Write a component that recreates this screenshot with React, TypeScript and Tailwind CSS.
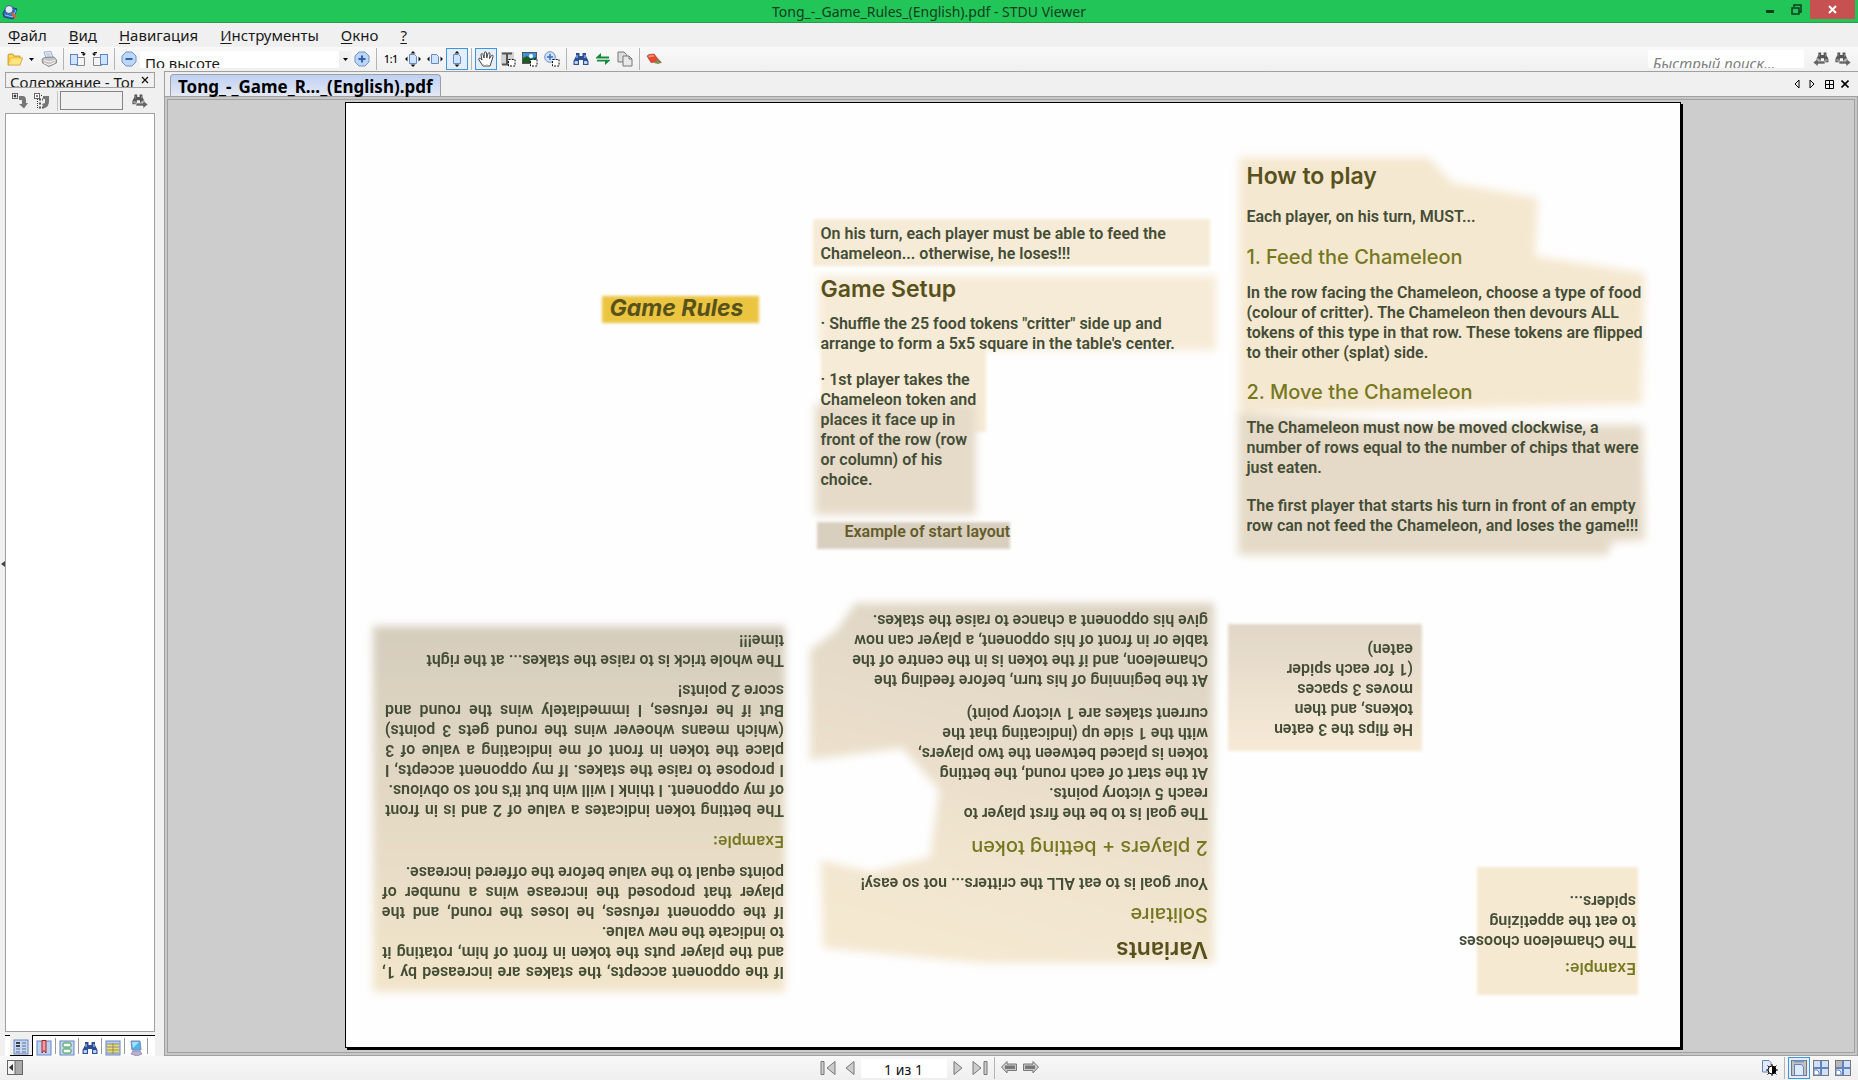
import React, { useState } from 'react';

// One icon-sized tool button, shared by every bar
interface ToolProps {
    label: string;
    active?: boolean;
    onClick?: () => void;
    children: React.ReactNode;
}

const Tool: React.FC<ToolProps> = ({ label, active, onClick, children }) => (
    <button
        type="button"
        aria-label={label}
        title={label}
        onClick={onClick}
        className={`flex h-[22px] w-[22px] shrink-0 items-center justify-center border ${
            active ? 'border-[#3d95e0] bg-[#e3eefa]' : 'border-transparent'
        }`}
    >
        {children}
    </button>
);

const Icon: React.FC<{ children: React.ReactNode }> = ({ children }) => (
    <svg viewBox="0 0 16 16" className="h-4 w-4 shrink-0" aria-hidden="true">
        {children}
    </svg>
);

const Separator = () => <div className="mx-[3px] h-[22px] w-px shrink-0 bg-[#b4b4b4]" />;

// --- Icons ---
const FolderIcon = () => (
    <Icon>
        <path d="M1 4 L2 3 H6 L7 5 H13 V7 H15.5 L13 14 H1 Z" fill="#f4c93c" stroke="#c2922a" strokeWidth="0.8" />
        <path d="M2 13 L4.5 7.5 H15 L12.7 13.5 H2 Z" fill="#fde681" />
        <path d="M2 5 H6" stroke="#fdf0b0" />
    </Icon>
);

const PrinterIcon = () => (
    <Icon>
        <path d="M3 1 L10 0.5 L12 7 H5 Z" fill="#eef3ff" stroke="#8898b8" strokeWidth="0.8" />
        <path d="M5 3 H9.500 M5.500 5 H10" stroke="#9fb4de" />
        <path d="M1 8 L4 6.5 L13 6 L15.500 9 V12 L8 15.500 L1.500 12 Z" fill="#c3c3c3" stroke="#777" strokeWidth="0.8" />
        <path d="M3 9 L8 11 L14.500 9 M3 12 L8 14 L14 11.500" stroke="#f4f4f4" fill="none" />
    </Icon>
);

const RotateRightIcon = () => (
    <Icon>
        <path d="M6.500 6.500 H14.500 V14.500 H6.500 Z" fill="#f4f4f4" stroke="#8a8a8a" />
        <rect x="0.500" y="3.500" width="7" height="10" fill="#cfe4fc" stroke="#5d86c8" />
        <path d="M11 1.500 H14 V3" fill="none" stroke="#111" />
        <path d="M11.500 2.500 H16 L13.800 5 Z" fill="#111" />
    </Icon>
);

const RotateLeftIcon = () => (
    <Icon>
        <path d="M1.500 6.500 H9.500 V14.500 H1.500 Z" fill="#f4f4f4" stroke="#8a8a8a" />
        <rect x="8.500" y="3.500" width="7" height="10" fill="#cfe4fc" stroke="#5d86c8" />
        <path d="M5 1.500 H2 V3" fill="none" stroke="#111" />
        <path d="M4.500 2.500 H0 L2.200 5 Z" fill="#111" />
    </Icon>
);

const ZoomGlyph: React.FC<{ plus?: boolean }> = ({ plus }) => (
    <Icon>
        <path d="M5 1 H11 L15 5 V11 L11 15 H5 L1 11 V5 Z" fill="#bcd6f6" stroke="#6f92cc" />
        <path d="M4.500 8 H11.500" stroke="#315fb2" strokeWidth="2" />
        {plus && <path d="M8 4.500 V11.500" stroke="#315fb2" strokeWidth="2" />}
    </Icon>
);

const FitIcon: React.FC<{ horizontal?: boolean; vertical?: boolean }> = ({ horizontal, vertical }) => (
    <Icon>
        <path d="M4.500 3.500 H9.500 L11.500 5.500 V12.500 H4.500 Z" fill="#cfe3fb" stroke="#6389c6" />
        {horizontal && <path d="M0 8 L2.500 5.500 V10.500 Z M16 8 L13.500 5.500 V10.500 Z" fill="#111" />}
        {vertical && <path d="M8 0 L5.500 2.500 H10.500 Z M8 16 L5.500 13.500 H10.500 Z" fill="#111" />}
    </Icon>
);

const HandIcon = () => (
    <Icon>
        <path
            d="M5 15 L1 9 C0 7.500 1.500 6.500 2.700 7.800 L4 9 L3 4 C2.700 2.500 4.500 2 5 3.600 L6 7 L6.300 2 C6.300 0.500 8.300 0.500 8.500 2 L8.800 7 L10 2.500 C10.400 1.200 12.200 1.500 12 3 L11.500 7.500 L13.300 4.700 C14 3.600 15.500 4.300 15 5.600 L13 12 L12 15 Z"
            fill="#fff"
            stroke="#444"
        />
        <path d="M6 15 L5 13 M9 15 V13" stroke="#bbb" />
    </Icon>
);

const DashBox = () => (
    <rect x="8.500" y="8.500" width="6.500" height="6.500" fill="#fff" stroke="#111" strokeDasharray="2 1.200" />
);

const TextSelectIcon = () => (
    <Icon>
        <rect x="1" y="1" width="13" height="13" fill="#d2d2d2" />
        <path d="M2 2.500 H12 M2 13.500 H9 M7 3 V13" stroke="#555" strokeWidth="2" />
        <DashBox />
    </Icon>
);

const ImageSelectIcon = () => (
    <Icon>
        <rect x="0.500" y="1.500" width="14" height="11" fill="#3c93dd" stroke="#555" />
        <path d="M1 12 V7 L5 5 L9 8 L14 6 V12 Z" fill="#1e5b22" />
        <circle cx="9" cy="5" r="2" fill="#fff" />
        <DashBox />
    </Icon>
);

const ZoomSelectIcon = () => (
    <Icon>
        <circle cx="6" cy="6" r="5.300" fill="#cfe3fb" stroke="#6d90c8" />
        <path d="M3 6 H9 M6 3 V9" stroke="#3d6dbd" strokeWidth="1.500" />
        <DashBox />
    </Icon>
);

const Binoculars: React.FC<{ dark: string; light: string }> = ({ dark, light }) => (
    <>
        <path d="M3 2 H6.500 V5 H9.500 V2 H13 V5 L15.500 10 V14 H10 V9 H6 V14 H0.500 V10 L3 5 Z" fill={dark} />
        <path d="M2 10.500 H4.500 V12.500 H2 Z M11.500 10.500 H14 V12.500 H11.500 Z M4 4 V7 M12 4 V7" fill={light} stroke={light} />
    </>
);

const FindIcon = () => (
    <Icon>
        <Binoculars dark="#2d4f93" light="#bcd3f7" />
    </Icon>
);

const FindNextIcon: React.FC<{ back?: boolean }> = ({ back }) => (
    <Icon>
        <g transform={back ? 'translate(3 0) scale(0.8)' : 'scale(0.8)'}>
            <Binoculars dark="#555" light="#999" />
        </g>
        <path
            d={back ? 'M0 11.500 L5 7.500 V10 H12 V13 H5 V15.500 Z' : 'M16 11.500 L11 7.500 V10 H4 V13 H11 V15.500 Z'}
            fill="#666"
            stroke="#f4f4f4"
            strokeWidth="0.600"
        />
    </Icon>
);

const SwapIcon = () => (
    <Icon>
        <path d="M1 6.500 L6 2 V5.500 H14 V7.500 H1 Z M15 9.500 L10 14 V10.500 H2 V8.800 H15 Z" fill="#128c3c" />
    </Icon>
);

const CopyIcon = () => (
    <Icon>
        <path d="M1 1 H7 L9.500 3.500 V11 H1 Z" fill="#ddd" stroke="#777" />
        <path d="M6 5 H12 L15 8 V15 H6 Z" fill="#e9e9e9" stroke="#777" />
        <path d="M12 5 V8 H15" fill="none" stroke="#777" />
    </Icon>
);

const EraserIcon = () => (
    <Icon>
        <path d="M1 5 L3 3.500 L8 3 L12 8 L11 11 L5 11.500 Z" fill="#e5482d" stroke="#a8341f" strokeWidth="0.600" />
        <path d="M2 4.800 L7.500 3.800 L8.500 5.500 L3 6.500 Z" fill="#f69377" />
        <path d="M8 12 L12 7.500 L16 11.500 L12 13 Z" fill="#7f8f5c" />
        <path d="M11 9 L14.500 11.500" stroke="#c8503a" />
    </Icon>
);

const ExpandIcon: React.FC<{ collapse?: boolean }> = ({ collapse }) => (
    <Icon>
        <rect x="0.500" y="0.500" width="5" height="5" fill="#fff" stroke="#666" />
        <path d={collapse ? 'M2 3 H4' : 'M1.500 3 H4.500 M3 1.500 V4.500'} stroke="#000" />
        {collapse ? (
            <>
                <path d="M3.500 6 V15 M7 2.500 H9" stroke="#333" strokeDasharray="1 1" />
                <path d="M5 6.500 H9 M5 10.500 H8 M5 14.500 H10" stroke="#555" strokeWidth="2" strokeDasharray="2 1" />
                <path d="M9 3 H15 V8 C15 12 13 15 10 15 L8 11 L11 10 V6 H9 Z" fill="#777" />
            </>
        ) : (
            <path d="M7 3 H11 C13 3 14 5 14 7 V10 H16 L12 15.500 L7 11 H10 V7 H7 Z" fill="#777" />
        )}
    </Icon>
);

const AppIcon = () => (
    <Icon>
        <path d="M1 9 L5 2 L15 5 L11 15 L2 13 Z" fill="#2f6ec0" stroke="#1d3f7c" />
        <path d="M3 11 L11 13 L14 6" stroke="#8fc1f5" fill="none" />
        <circle cx="7" cy="5.500" r="4" fill="#d9ebfb" stroke="#46598c" />
        <path d="M10 9 L14 14" stroke="#d4623a" strokeWidth="2.500" />
    </Icon>
);

// --- Icons of the tabs below the side panel ---
const panelTabs = [
    {
        label: 'Содержание',
        art: (
            <>
                <rect x="1" y="1" width="14" height="14" fill="#c5d7f3" stroke="#6684bd" />
                <path d="M3 4 H7 M3 7 H7" stroke="#111" strokeWidth="1.500" />
                <path d="M9 4 H13 M9 7 H13 M9 10 H13 M3 10 H7 M3 13 H7 M9 13 H13" stroke="#5c6c8c" />
            </>
        ),
    },
    {
        label: 'Закладки',
        art: (
            <>
                <rect x="1" y="1" width="14" height="14" fill="#bdd2f3" stroke="#6684bd" />
                <path d="M6 0.500 H10 V13 L8 10.500 L6 13 Z" fill="#ef9c9c" stroke="#a5222b" />
            </>
        ),
    },
    {
        label: 'Эскизы',
        art: (
            <>
                <rect x="1" y="1" width="14" height="14" fill="#c5d7f3" stroke="#6684bd" />
                <rect x="4" y="3" width="8" height="4" rx="1" fill="#fff" stroke="#2f9a3b" />
                <rect x="4" y="9" width="8" height="4" rx="1" fill="#fff" stroke="#2f9a3b" />
            </>
        ),
    },
    { label: 'Поиск', art: <Binoculars dark="#2d4f93" light="#bcd3f7" /> },
    {
        label: 'Таблица',
        art: (
            <>
                <rect x="1" y="1" width="14" height="14" fill="#b9cdf0" stroke="#6684bd" />
                <path d="M2 5.500 H14 M2 8.500 H14 M2 11.500 H14" stroke="#f4df55" strokeWidth="2" />
                <path d="M2 4 H14 M2 7 H14 M2 10 H14 M2 13 H14 M8 3 V14" stroke="#7d7a4c" strokeWidth="0.700" />
            </>
        ),
    },
    {
        label: 'Компьютер',
        art: (
            <>
                <path d="M3 1 H12 L13 10 L4 10 Z" fill="#4db4f1" stroke="#7986ad" />
                <path d="M4 2 H11 L5 8 Z" fill="#a9e0fc" />
                <path d="M5 11 H12 L14 14 L9 16 L3 14 Z" fill="#b8b1d0" stroke="#837ba6" strokeWidth="0.700" />
            </>
        ),
    },
];

// --- Text of the leaflet ---
// A line marked with "=" in front is stretched to both edges of its block
const Lines: React.FC<{ text: string[]; className?: string }> = ({ text, className = '' }) => (
    <p className={`text-[16px] leading-5 font-semibold whitespace-nowrap text-[#444d36] ${className}`}>
        {text.map((line) => {
            const justified = line.startsWith('=');
            return (
                <span key={line} className={`block ${justified ? '[text-align-last:justify]' : ''}`}>
                    {justified ? line.slice(1) : line}
                </span>
            );
        })}
    </p>
);

const Title: React.FC<{ children: React.ReactNode; className?: string }> = ({ children, className = '' }) => (
    <h2 className={`font-['Inter',sans-serif] text-[23px] leading-8 font-semibold whitespace-nowrap text-[#57511c] ${className}`}>
        {children}
    </h2>
);

const Subtitle: React.FC<{ children: React.ReactNode; className?: string }> = ({ children, className = '' }) => (
    <h3 className={`font-['Inter',sans-serif] text-[20px] leading-7 font-medium whitespace-nowrap text-[#75781f] ${className}`}>
        {children}
    </h3>
);

const Caption: React.FC<{ children: React.ReactNode; className?: string }> = ({ children, className = '' }) => (
    <h4 className={`font-['Inter',sans-serif] text-[16px] leading-5 font-semibold text-[#75781f] ${className}`}>{children}</h4>
);

// Soft parchment patches behind the text
const Patches = () => (
    <svg
        viewBox="346 103 1334 944"
        preserveAspectRatio="none"
        className="absolute inset-0 h-full w-full"
        aria-hidden="true"
    >
        <defs>
            <filter id="soft">
                <feGaussianBlur stdDeviation="4" />
            </filter>
            <filter id="fine">
                <feGaussianBlur stdDeviation="1.500" />
            </filter>
            <linearGradient id="left" x1="0" y1="0" x2="0" y2="1">
                <stop offset="0" stopColor="#d5cdbd" />
                <stop offset="1" stopColor="#f2e5cb" />
            </linearGradient>
            <linearGradient id="middle" x1="0.700" y1="0" x2="0.400" y2="1">
                <stop offset="0" stopColor="#dcd3c3" />
                <stop offset="0.750" stopColor="#f1e5cf" />
                <stop offset="1" stopColor="#f4e8d0" />
            </linearGradient>
            <linearGradient id="small" x1="0" y1="0" x2="0" y2="1">
                <stop offset="0" stopColor="#e1d7c7" />
                <stop offset="1" stopColor="#f6ead6" />
            </linearGradient>
        </defs>
        <g filter="url(#fine)">
            <rect x="602" y="296" width="157" height="27" fill="#ecc540" />
            <rect x="813" y="219" width="397" height="47" fill="#f6ebd6" />
            <rect x="821" y="345" width="165" height="87" fill="#f6ebd6" />
            <rect x="817" y="522" width="193" height="27" fill="#d8cfbf" />
            <rect x="1228" y="624" width="194" height="127" fill="url(#small)" />
            <rect x="1477" y="867" width="161" height="128" fill="#f5e9d2" />
        </g>
        <g filter="url(#soft)">
            <rect x="819" y="276" width="397" height="74" fill="#f6ebd6" />
            <rect x="815" y="404" width="161" height="111" fill="#e6dbc9" />
            <path d="M1239 157 L1428 157 L1453 183 L1538 198 L1535 256 L1645 273 L1642 404 L1239 413 Z" fill="#f5e8d0" />
            <path d="M1238 413 L1400 424 L1643 425 L1645 540 L1612 542 L1608 555 L1238 555 Z" fill="#e5dac7" />
            <rect x="373" y="626" width="412" height="366" fill="url(#left)" />
            <path
                d="M855 603 H1214 V963 H980 L823 948 L821 860 L870 872 L930 857 L939 790 L902 748 L810 760 V650 L837 630 Z"
                fill="url(#middle)"
            />
        </g>
    </svg>
);

const Leaflet = () => (
    <article className="relative flex h-full w-full max-w-[1336px] flex-col border border-black bg-[#fefefe] font-['Roboto','Liberation_Sans',sans-serif] shadow-[2px_2px_0_#000]">
        <Patches />
        <div className="relative grid h-1/2 grid-cols-[475fr_426fr_433fr]">
            <section className="pt-[189px] pl-[264px]">
                <h1 className="font-['Inter',sans-serif] text-[23px] leading-8 font-bold whitespace-nowrap text-[#57511c] italic">
                    Game Rules
                </h1>
            </section>
            <section className="pt-[121px]">
                <Lines text={['On his turn, each player must be able to feed the', 'Chameleon... otherwise, he loses!!!']} />
                <Title className="mt-[9px]">Game Setup</Title>
                <Lines
                    className="mt-[9px]"
                    text={[
                        '· Shuffle the 25 food tokens "critter" side up and',
                        "arrange to form a 5x5 square in the table's center.",
                    ]}
                />
                <Lines
                    className="mt-4"
                    text={[
                        '· 1st player takes the',
                        'Chameleon token and',
                        'places it face up in',
                        'front of the row (row',
                        'or column) of his',
                        'choice.',
                    ]}
                />
                <p className="mt-8 pl-6 text-[16px] leading-5 font-semibold text-[#655b2b]">Example of start layout</p>
            </section>
            <section className="pt-[57px]">
                <Title>How to play</Title>
                <Lines className="mt-[15px]" text={['Each player, on his turn, MUST...']} />
                <Subtitle className="mt-4">1. Feed the Chameleon</Subtitle>
                <Lines
                    className="mt-3"
                    text={[
                        'In the row facing the Chameleon, choose a type of food',
                        '(colour of critter). The Chameleon then devours ALL',
                        'tokens of this type in that row. These tokens are flipped',
                        'to their other (splat) side.',
                    ]}
                />
                <Subtitle className="mt-[15px]">2. Move the Chameleon</Subtitle>
                <Lines
                    className="mt-3"
                    text={[
                        'The Chameleon must now be moved clockwise, a',
                        'number of rows equal to the number of chips that were',
                        'just eaten.',
                    ]}
                />
                <Lines
                    className="mt-[18px]"
                    text={[
                        'The first player that starts his turn in front of an empty',
                        'row can not feed the Chameleon, and loses the game!!!',
                    ]}
                />
            </section>
        </div>

        {/* The lower half is printed upside down, so the sheet can be folded */}
        <div className="relative grid h-1/2 rotate-180 grid-cols-[472fr_424fr_438fr]">
            <section className="pt-[68px] pl-[44px]">
                <Caption>Example:</Caption>
                <Lines className="mt-2" text={['The Chameleon chooses', 'to eat the appetizing', 'spiders...']} />
                <Lines
                    className="mt-[152px] pl-[223px]"
                    text={['He flips the 3 eaten', 'tokens, and then', 'moves 3 spaces', '(1 for each spider', 'eaten)']}
                />
            </section>
            <section className="pt-[81px]">
                <Title>Variants</Title>
                <Subtitle className="mt-[5px]">Solitaire</Subtitle>
                <Lines className="mt-2" text={['Your goal is to eat ALL the critters... not so easy!']} />
                <Subtitle className="mt-[11px]">2 players + betting token</Subtitle>
                <Lines
                    className="mt-[11px]"
                    text={[
                        'The goal is to be the first player to',
                        'reach 5 victory points.',
                        'At the start of each round, the betting',
                        'token is placed between the two players,',
                        'with the 1 side up (indicating that the',
                        'current stakes are 1 victory point)',
                    ]}
                />
                <Lines
                    className="mt-[13px]"
                    text={[
                        'At the beginning of his turn, before feeding the',
                        'Chameleon, and if the token is in the centre of the',
                        'table or in front of his opponent, a player can now',
                        'give his opponent a chance to raise the stakes.',
                    ]}
                />
            </section>
            <section className="pt-[65px] pr-9">
                <Lines
                    text={[
                        '=If the opponent accepts, the stakes are increased by 1,',
                        '=and the player puts the token in front of him, rotating it',
                        'to indicate the new value.',
                        '=If the opponent refuses, he loses the round, and the',
                        '=player that proposed the increase wins a number of',
                        'points equal to the value before the offered increase.',
                    ]}
                />
                <Caption className="mt-[10px]">Example:</Caption>
                <Lines
                    className="mt-3 pr-[3px]"
                    text={[
                        '=The betting token indicates a value of 2 and is in front',
                        "of my opponent. I think I will win but it's not so obvious.",
                        '=I propose to raise the stakes. If my opponent accepts, I',
                        '=place the token in front of me indicating a value of 3',
                        '=(which means whoever wins the round gets 3 points)',
                        '=But if he refuses, I immediately wins the round and',
                        'score 2 points!',
                    ]}
                />
                <Lines className="mt-[10px]" text={['The whole trick is to raise the stakes... at the right', 'time!!!']} />
            </section>
        </div>
    </article>
);

// --- Window parts ---
const TitleBar = () => (
    <header className="grid h-[23px] grid-cols-[1fr_auto_1fr] border-b border-[#2b9a4c] bg-[#22c558]">
        <div className="flex items-center pl-[2px]">
            <AppIcon />
        </div>
        <h1 className="text-[14px] leading-[23px] text-[#143d20]">Tong_-_Game_Rules_(English).pdf - STDU Viewer</h1>
        <div className="flex items-start justify-end pr-[3px]">
            <button type="button" aria-label="Свернуть" className="flex h-[19px] w-6 items-end justify-center pb-[6px]">
                <span className="h-[3px] w-2 bg-[#123d1e]" />
            </button>
            <button type="button" aria-label="Восстановить" className="flex h-[19px] w-7 items-center justify-center">
                <svg viewBox="0 0 11 11" className="h-[11px] w-[11px]" aria-hidden="true">
                    <path d="M1 4 H8 V10 H1 Z M3 3 V1 H10 V8 H8" fill="none" stroke="#123d1e" strokeWidth="1.500" />
                </svg>
            </button>
            <button type="button" aria-label="Закрыть" className="flex h-[19px] w-[45px] items-center justify-center bg-[#c75050]">
                <svg viewBox="0 0 9 9" className="h-[9px] w-[9px]" aria-hidden="true">
                    <path d="M1 1 L8 8 M8 1 L1 8" stroke="#fff" strokeWidth="2" />
                </svg>
            </button>
        </div>
    </header>
);

const menuItems = ['Файл', 'Вид', 'Навигация', 'Инструменты', 'Окно', '?'];

const MenuBar = () => (
    <nav className="flex h-6 items-center gap-[22px] bg-[#f0f0f0] pl-2">
        {menuItems.map((item) => (
            <button key={item} type="button" className="text-[15px] leading-6 text-[#1a1a1a]">
                <span className="underline underline-offset-2">{item[0]}</span>
                {item.slice(1)}
            </button>
        ))}
    </nav>
);

const Toolbar = () => {
    const [fit, setFit] = useState('height');
    const [mode, setMode] = useState('hand');

    return (
        <div className="flex h-6 items-center bg-linear-to-b from-[#f9f9f9] to-[#f0f0f0] pl-1">
            <Tool label="Открыть">
                <FolderIcon />
            </Tool>
            <button type="button" aria-label="Недавние файлы" className="mr-px flex h-[22px] w-[11px] items-center justify-center">
                <svg viewBox="0 0 5 3" className="h-[3px] w-[5px]" aria-hidden="true">
                    <path d="M0 0 H5 L2.500 3 Z" />
                </svg>
            </button>
            <Tool label="Печать">
                <PrinterIcon />
            </Tool>
            <Separator />
            <Tool label="Повернуть вправо">
                <RotateRightIcon />
            </Tool>
            <Tool label="Повернуть влево">
                <RotateLeftIcon />
            </Tool>
            <Separator />
            <Tool label="Уменьшить">
                <ZoomGlyph />
            </Tool>
            <div className="relative h-[17px] w-[211px] overflow-hidden bg-white">
                <select
                    aria-label="Масштаб"
                    defaultValue="height"
                    className="h-[25px] w-full appearance-none pl-[5px] text-[15px] text-[#1a1a1a] outline-none"
                >
                    <option value="height">По высоте</option>
                    <option value="width">По ширине</option>
                </select>
                <div className="pointer-events-none absolute top-0 right-0 flex h-full w-[12px] items-center justify-center bg-[#f0f0f0]">
                    <svg viewBox="0 0 5 3" className="h-[3px] w-[5px]" aria-hidden="true">
                        <path d="M0 0 H5 L2.500 3 Z" />
                    </svg>
                </div>
            </div>
            <Tool label="Увеличить">
                <ZoomGlyph plus />
            </Tool>
            <Separator />
            <Tool label="Фактический размер">
                <span className="text-[10px] leading-4 font-medium text-black">1:1</span>
            </Tool>
            <Tool label="Страница целиком" active={fit === 'page'} onClick={() => setFit('page')}>
                <FitIcon horizontal vertical />
            </Tool>
            <Tool label="По ширине" active={fit === 'width'} onClick={() => setFit('width')}>
                <FitIcon horizontal />
            </Tool>
            <Tool label="По высоте" active={fit === 'height'} onClick={() => setFit('height')}>
                <FitIcon vertical />
            </Tool>
            <Separator />
            <Tool label="Рука" active={mode === 'hand'} onClick={() => setMode('hand')}>
                <HandIcon />
            </Tool>
            <Tool label="Выделение текста" active={mode === 'text'} onClick={() => setMode('text')}>
                <TextSelectIcon />
            </Tool>
            <Tool label="Выделение изображения" active={mode === 'image'} onClick={() => setMode('image')}>
                <ImageSelectIcon />
            </Tool>
            <Tool label="Увеличить область" active={mode === 'zoom'} onClick={() => setMode('zoom')}>
                <ZoomSelectIcon />
            </Tool>
            <Separator />
            <Tool label="Найти">
                <FindIcon />
            </Tool>
            <Tool label="Перейти">
                <SwapIcon />
            </Tool>
            <Tool label="Копировать">
                <CopyIcon />
            </Tool>
            <Separator />
            <Tool label="Ластик">
                <EraserIcon />
            </Tool>
            <div className="ml-auto h-[18px] w-[156px] overflow-hidden bg-white">
                <input
                    type="text"
                    aria-label="Быстрый поиск"
                    placeholder="Быстрый поиск..."
                    className="h-[25px] w-full pl-[5px] text-[15px] italic outline-none placeholder:text-[#808080]"
                />
            </div>
            <div className="flex pr-1 pl-[6px]">
                <Tool label="Найти предыдущее">
                    <FindNextIcon back />
                </Tool>
                <Tool label="Найти следующее">
                    <FindNextIcon />
                </Tool>
            </div>
        </div>
    );
};

const SidePanel = () => {
    const [active, setActive] = useState(0);

    return (
        <aside className="flex w-[164px] shrink-0">
            <button type="button" aria-label="Скрыть панель" className="flex w-[5px] items-center justify-center">
                <svg viewBox="0 0 4 6" className="h-[6px] w-1" aria-hidden="true">
                    <path d="M4 0 V6 L0 3 Z" fill="#444" />
                </svg>
            </button>
            <div className="flex w-[150px] flex-col">
                <div className="mt-px flex h-4 items-start overflow-hidden border border-[#a0a0a0] pl-1">
                    <h2 className="w-[124px] shrink-0 overflow-hidden text-[15px] leading-[18px] whitespace-nowrap text-[#1a1a1a]">
                        Содержание - Tong
                    </h2>
                    <button type="button" aria-label="Закрыть панель" className="ml-[7px] pt-[3px]">
                        <svg viewBox="0 0 8 8" className="h-2 w-2" aria-hidden="true">
                            <path d="M1 1 L7 7 M7 1 L1 7" stroke="#111" strokeWidth="1.200" />
                        </svg>
                    </button>
                </div>
                <div className="flex h-[25px] items-center pl-1">
                    <Tool label="Развернуть">
                        <ExpandIcon />
                    </Tool>
                    <Tool label="Свернуть">
                        <ExpandIcon collapse />
                    </Tool>
                    <div className="mr-[2px] ml-1 h-5 w-px bg-[#c4c4c4]" />
                    <input
                        type="text"
                        aria-label="Поиск в содержании"
                        className="h-[19px] w-[63px] border border-[#858585] bg-[#f0f0f0] outline-none"
                    />
                    <div className="ml-[6px]">
                        <Tool label="Найти далее">
                            <FindNextIcon />
                        </Tool>
                    </div>
                </div>
                <div className="flex-1 border border-[#a0a0a0] bg-white" />
                <div className="mt-[3px] flex h-[21px] border-t border-black bg-white pl-[5px]" role="tablist">
                    {panelTabs.map((tab, i) => (
                        <button
                            key={tab.label}
                            type="button"
                            role="tab"
                            aria-label={tab.label}
                            aria-selected={i === active}
                            onClick={() => setActive(i)}
                            className={
                                i === active
                                    ? '-mt-px flex h-[21px] w-[23px] items-end justify-center border-r border-b border-black bg-[#f0f0f0]'
                                    : 'flex h-5 w-[23px] items-end pl-[3px]'
                            }
                        >
                            <Icon>{tab.art}</Icon>
                            {i > active && <span className="mb-[2px] ml-[3px] h-4 w-px shrink-0 bg-[#999]" />}
                        </button>
                    ))}
                </div>
            </div>
        </aside>
    );
};

const Workspace = () => (
    <main className="flex min-w-0 flex-1 flex-col border-t border-l border-[#a0a0a0]">
        <div className="flex h-[25px] items-end border-b border-[#a0a0a0] pl-[5px]">
            <button
                type="button"
                className="h-[22px] rounded-t-sm border border-b-0 border-[#a0a0a0] bg-linear-to-b from-[#bfd0f4] to-[#e4e9f4] px-[7px] text-[17px] leading-[24px] font-bold text-black"
            >
                Tong_-_Game_R..._(English).pdf
            </button>
            <div className="mb-[7px] ml-auto flex items-center gap-[7px] pr-[9px]">
                <button type="button" aria-label="Предыдущая вкладка">
                    <svg viewBox="0 0 8 10" className="h-[10px] w-2" aria-hidden="true">
                        <path d="M6 1 V9 L2 5 Z" fill="none" stroke="#000" />
                    </svg>
                </button>
                <button type="button" aria-label="Следующая вкладка">
                    <svg viewBox="0 0 8 10" className="h-[10px] w-2" aria-hidden="true">
                        <path d="M2 1 V9 L6 5 Z" fill="none" stroke="#000" />
                    </svg>
                </button>
                <button type="button" aria-label="Список вкладок" className="ml-[2px]">
                    <svg viewBox="0 0 9 9" className="h-[9px] w-[9px]" aria-hidden="true">
                        <path d="M0.500 0.500 H8.500 V8.500 H0.500 Z M4.500 0 V9 M0 4.500 H9" fill="none" stroke="#000" />
                    </svg>
                </button>
                <button type="button" aria-label="Закрыть вкладку">
                    <svg viewBox="0 0 8 8" className="h-2 w-2" aria-hidden="true">
                        <path d="M0.500 0.500 L7.500 7.500 M7.500 0.500 L0.500 7.500" stroke="#000" strokeWidth="1.600" />
                    </svg>
                </button>
            </div>
        </div>
        <div className="flex min-h-0 flex-1 border-r border-b border-[#a0a0a0] bg-[#c8c8c8] p-[2px]">
            <div className="flex flex-1 justify-center border border-[#a0a0a0] bg-[#cdcdcd] pt-[2px] pb-1 pl-[3px]">
                <Leaflet />
            </div>
        </div>
    </main>
);

const StatusBar = () => (
    <footer className="grid h-6 grid-cols-[1fr_auto_1fr] items-center bg-linear-to-b from-[#f8f8f8] to-[#efefef]">
        <div className="pl-1">
            <Tool label="Панель навигации">
                <Icon>
                    <rect x="0.500" y="0.500" width="15" height="14" fill="#f4f4f4" stroke="#666" />
                    <path d="M8 1 H15 V14 H8 Z" fill="#aaa" />
                    <path d="M8 1 V14" stroke="#666" />
                    <path d="M6 4 V11 L2 7.500 Z" fill="#333" />
                </Icon>
            </Tool>
        </div>
        <div className="flex items-center">
            <Tool label="Первая страница">
                <Icon>
                    <path d="M1 1.500 H4 V14.500 H1 Z M15 1.500 V14.500 L7 8 Z" fill="#ccc" stroke="#777" />
                </Icon>
            </Tool>
            <Tool label="Предыдущая страница">
                <Icon>
                    <path d="M12 1.500 V14.500 L4 8 Z" fill="#ccc" stroke="#777" />
                </Icon>
            </Tool>
            <input
                type="text"
                aria-label="Номер страницы"
                defaultValue="1 из 1"
                className="h-[19px] w-[86px] bg-white pt-[2px] text-center text-[14px] leading-4 text-[#111] outline-none"
            />
            <Tool label="Следующая страница">
                <Icon>
                    <path d="M4 1.500 V14.500 L12 8 Z" fill="#ccc" stroke="#777" />
                </Icon>
            </Tool>
            <Tool label="Последняя страница">
                <Icon>
                    <path d="M1 1.500 V14.500 L9 8 Z M12 1.500 H15 V14.500 H12 Z" fill="#ccc" stroke="#777" />
                </Icon>
            </Tool>
            <Separator />
            <Tool label="Назад">
                <Icon>
                    <path d="M0.500 7 L6 1.500 V4 H15.500 V10.500 H6 V13 Z" fill="#ccc" stroke="#777" />
                    <path d="M4 5.500 H14 V9 H4 Z" fill="#777" />
                </Icon>
            </Tool>
            <Tool label="Вперёд">
                <Icon>
                    <path d="M15.500 7 L10 1.500 V4 H0.500 V10.500 H10 V13 Z" fill="#ccc" stroke="#777" />
                    <path d="M2 5.500 H12 V9 H2 Z" fill="#777" />
                </Icon>
            </Tool>
        </div>
        <div className="flex items-center justify-end pr-1">
            <Tool label="Инвертировать цвета">
                <Icon>
                    <path d="M0.500 0.500 H7 L9 2.500 V12 H0.500 Z" fill="#dfeafc" stroke="#6582c0" />
                    <path d="M10 4 V16 M4 10 H16 M5.500 5.500 L14.500 14.500 M14.500 5.500 L5.500 14.500" stroke="#111" />
                    <circle cx="10" cy="10" r="4" fill="#fff" stroke="#000" />
                    <path d="M10 6 A4 4 0 0 1 10 14 Z" />
                </Icon>
            </Tool>
            <Separator />
            <Tool label="Одна страница" active>
                <Icon>
                    <rect x="0.500" y="0.500" width="15" height="15" fill="#c2c2c2" stroke="#777" />
                    <path d="M3 1.500 H13" stroke="#7a96cc" strokeWidth="2" />
                    <path d="M3.500 4.500 H10.500 L12.500 7 V15.500 H3.500 Z" fill="#dcebfd" stroke="#6582c0" />
                </Icon>
            </Tool>
            <Tool label="Две страницы">
                <Icon>
                    <rect x="0.500" y="0.500" width="15" height="15" fill="#cfe1fa" stroke="#777" />
                    <path d="M8 1 V15 M1 8 H15" stroke="#6582c0" strokeWidth="2" />
                    <path d="M1 10 H4 L6 12 V15 H1 Z" fill="#fff" stroke="#6582c0" />
                </Icon>
            </Tool>
            <Tool label="Разворот">
                <Icon>
                    <rect x="0.500" y="0.500" width="15" height="15" fill="#cfe1fa" stroke="#777" />
                    <rect x="1" y="1" width="7" height="7" fill="#b8b8b8" />
                    <path d="M8 1 V15 M1 8 H15" stroke="#6582c0" strokeWidth="2" />
                    <path d="M1 10 H4 L6 12 V15 H1 Z" fill="#fff" stroke="#6582c0" />
                </Icon>
            </Tool>
        </div>
    </footer>
);

const App: React.FC = () => (
    <div className="flex h-screen flex-col overflow-hidden bg-[#f0f0f0] font-['Noto_Sans','Open_Sans',sans-serif]">
        <TitleBar />
        <MenuBar />
        <Toolbar />
        <div className="flex min-h-0 flex-1">
            <SidePanel />
            <Workspace />
        </div>
        <StatusBar />
    </div>
);

export default App;
